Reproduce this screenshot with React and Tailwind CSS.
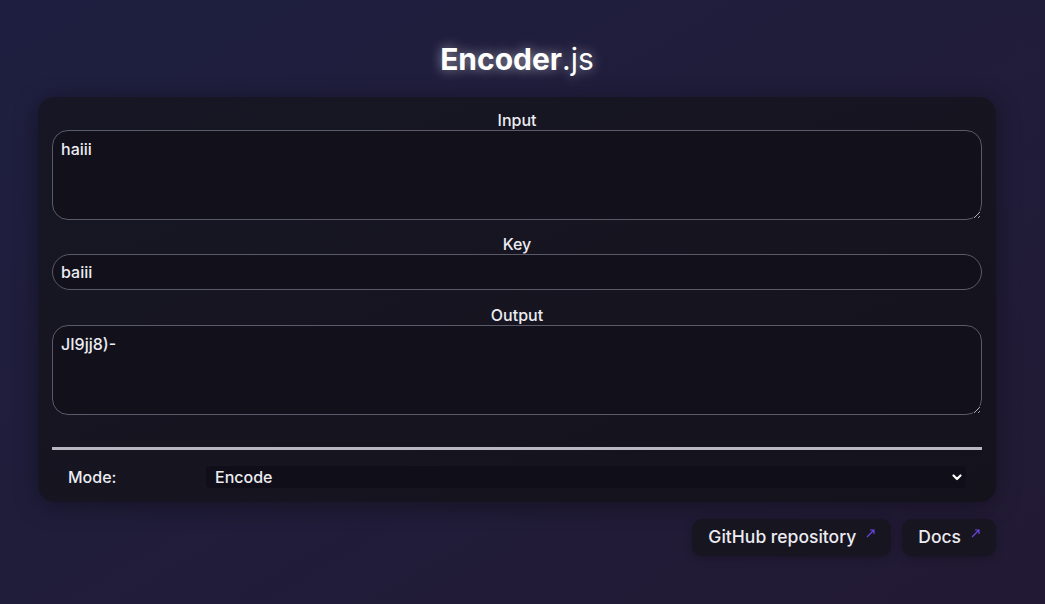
import React from "react";

function Arrow() {
  return (
    <svg width="9" height="9" viewBox="0 0 9 9" className="self-start mt-[10px]" fill="none">
      <path d="M1 8 L8 1 M4 1 H8 V5" stroke="#6a45e6" strokeWidth="1.2" />
    </svg>
  );
}

export default function App() {
  return (
    <div
      className="min-h-screen w-full bg-gradient-to-br from-[#1e1f40] to-[#221a34] text-[#ececf2]"
      style={{ fontFamily: "Inter, 'Noto Sans', sans-serif" }}
    >
      <div className="pl-[38px] pt-[41px] w-[996px]">
        <h1 className="text-center text-[30px] leading-[36px] text-white [text-shadow:0_0_12px_rgba(255,255,255,0.55)]">
          <span className="font-bold">Encoder</span>
          <span className="font-normal">.js</span>
        </h1>
        <div className="mt-[20px] w-[958px] rounded-[16px] bg-gradient-to-br from-[#171624] to-[#14131c] px-[14px] pt-[14px] pb-[14px] shadow-[0_4px_24px_rgba(0,0,0,0.35)]">
          <div className="text-center text-[16px] leading-[19px] font-medium">Input</div>
          <textarea
            defaultValue="haiii"
            className="block w-full h-[90px] rounded-[16px] border border-[#5b5a68] bg-[#11101b] px-[8px] py-[6px] text-[16px] leading-[24px] font-medium text-[#ececf2] outline-none"
            style={{ fontFamily: "Inter, sans-serif" }}
          />
          <div className="mt-[15px] text-center text-[16px] leading-[19px] font-medium">Key</div>
          <input
            defaultValue="baiii"
            className="block w-full h-[36px] rounded-[18px] border border-[#5b5a68] bg-[#11101b] px-[8px] text-[16px] font-medium text-[#ececf2] outline-none"
            style={{ fontFamily: "Inter, sans-serif" }}
          />
          <div className="mt-[16px] text-center text-[16px] leading-[19px] font-medium">Output</div>
          <textarea
            defaultValue="JI9jj8)-"
            className="block w-full h-[90px] rounded-[16px] border border-[#5b5a68] bg-[#11101b] px-[8px] py-[6px] text-[16px] leading-[24px] font-medium text-[#ececf2] outline-none"
            style={{ fontFamily: "Inter, sans-serif" }}
          />
          <div className="mt-[32px] h-[3px] w-full bg-[#b9b8c2]" />
          <div className="mt-[16px] flex items-center px-[16px]">
            <div className="w-[138px] text-[16px] font-medium leading-[22px]">Mode:</div>
            <div className="flex h-[22px] flex-1 items-center justify-between rounded-[4px] bg-[#100f19] pl-[9px] pr-[3px]">
              <span className="text-[16px] font-medium leading-[22px]">Encode</span>
              <svg width="12" height="12" viewBox="0 0 12 12" fill="none">
                <path d="M2.5 4.5 L6 8 L9.5 4.5" stroke="white" strokeWidth="2.2" strokeLinecap="round" strokeLinejoin="round" />
              </svg>
            </div>
          </div>
        </div>
        <div className="mt-[17px] flex justify-end gap-[11px]">
          <a className="flex h-[37px] items-center gap-[10px] rounded-[10px] bg-[#17151f] pl-[16px] pr-[16px] text-[17.5px] font-medium text-[#ececf2] shadow-[0_2px_10px_rgba(0,0,0,0.25)]">
            <span>GitHub repository</span>
            <Arrow />
          </a>
          <a className="flex h-[37px] items-center gap-[10px] rounded-[10px] bg-[#17151f] pl-[16px] pr-[16px] text-[17.5px] font-medium text-[#ececf2] shadow-[0_2px_10px_rgba(0,0,0,0.25)]">
            <span>Docs</span>
            <Arrow />
          </a>
        </div>
      </div>
    </div>
  );
}
